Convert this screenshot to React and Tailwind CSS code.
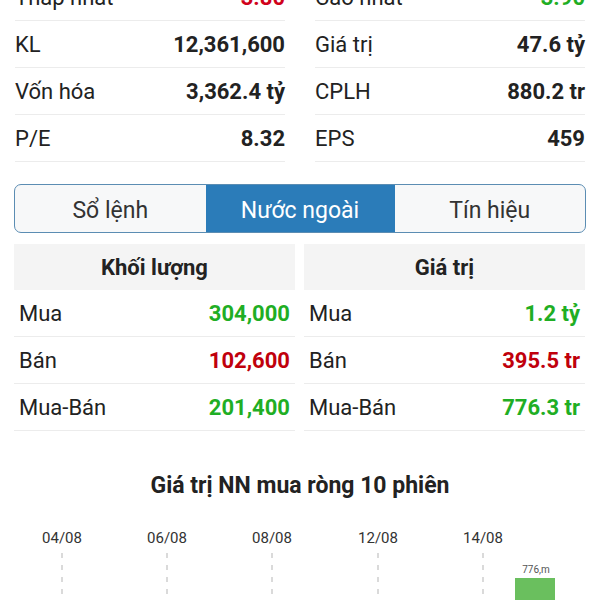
const font = { fontFamily: "Roboto, 'Noto Sans', sans-serif" };

const stats = [
  [
    ["Thấp nhất", "3.80", "text-[#d0021b]"],
    ["KL", "12,361,600", "text-[#222]"],
    ["Vốn hóa", "3,362.4 tỷ", "text-[#222]"],
    ["P/E", "8.32", "text-[#222]"],
  ],
  [
    ["Cao nhất", "3.90", "text-[#1fae24]"],
    ["Giá trị", "47.6 tỷ", "text-[#222]"],
    ["CPLH", "880.2 tr", "text-[#222]"],
    ["EPS", "459", "text-[#222]"],
  ],
];

const foreign = [
  {
    title: "Khối lượng",
    rows: [
      ["Mua", "304,000", "text-[#1fae24]"],
      ["Bán", "102,600", "text-[#c0000c]"],
      ["Mua-Bán", "201,400", "text-[#1fae24]"],
    ],
  },
  {
    title: "Giá trị",
    rows: [
      ["Mua", "1.2 tỷ", "text-[#1fae24]"],
      ["Bán", "395.5 tr", "text-[#c0000c]"],
      ["Mua-Bán", "776.3 tr", "text-[#1fae24]"],
    ],
  },
];

const dates = [
  ["04/08", 62],
  ["06/08", 167],
  ["08/08", 272],
  ["12/08", 378],
  ["14/08", 483],
];

function StatColumn({ rows }) {
  return (
    <div className="flex flex-col">
      {rows.map(([label, value, color]) => (
        <div
          key={label}
          className="flex h-[47px] items-center justify-between border-b border-[#ececec]"
        >
          <span className="text-[22px] text-[#222]">{label}</span>
          <span className={`text-[22px] font-bold ${color}`}>{value}</span>
        </div>
      ))}
    </div>
  );
}

function ForeignTable({ title, rows }) {
  return (
    <div className="flex flex-col">
      <div className="flex h-[46px] items-center justify-center bg-[#f4f4f4] text-[22px] font-bold text-[#222]">
        {title}
      </div>
      {rows.map(([label, value, color]) => (
        <div
          key={label}
          className="flex h-[47px] items-center justify-between border-b border-[#ececec] px-[5px]"
        >
          <span className="text-[22px] text-[#222]">{label}</span>
          <span className={`text-[22px] font-bold ${color}`}>{value}</span>
        </div>
      ))}
    </div>
  );
}

function Chart() {
  return (
    <div className="relative h-[110px] w-full">
      {dates.map(([d, x]) => (
        <div key={d}>
          <span
            className="absolute top-[23px] -translate-x-1/2 text-[15px] text-[#333]"
            style={{ left: x }}
          >
            {d}
          </span>
          <svg
            className="absolute top-[49px]"
            style={{ left: x - 1 }}
            width="2"
            height="60"
          >
            <line
              x1="1"
              y1="0"
              x2="1"
              y2="60"
              stroke="#b5b5b5"
              strokeWidth="1"
              strokeDasharray="5 7"
            />
          </svg>
        </div>
      ))}
      <span className="absolute left-[536px] top-[58px] -translate-x-1/2 text-[10px] text-[#555]">
        776,m
      </span>
      <div className="absolute left-[515px] top-[74px] h-[40px] w-[40px] bg-[#6abf5e]" />
    </div>
  );
}

export default function App() {
  return (
    <div className="h-[600px] w-[600px] overflow-hidden bg-white" style={font}>
      <div className="mt-[-26px] grid grid-cols-2 gap-[30px] px-[15px]">
        <StatColumn rows={stats[0]} />
        <StatColumn rows={stats[1]} />
      </div>

      <div className="mx-[14px] mt-[22px] flex h-[49px] overflow-hidden rounded-[7px] border border-[#5b8db3] bg-[#f7f8f9]">
        <div className="flex flex-1 items-center justify-center pt-[5px] text-[23px] text-[#333]">
          Sổ lệnh
        </div>
        <div className="flex w-[189px] items-center justify-center bg-[#2b7cb9] pt-[5px] text-[23px] text-white">
          Nước ngoài
        </div>
        <div className="flex flex-1 items-center justify-center pt-[5px] text-[23px] text-[#333]">
          Tín hiệu
        </div>
      </div>

      <div className="mt-[11px] grid grid-cols-2 gap-[9px] pl-[14px] pr-[15px]">
        {foreign.map((t) => (
          <ForeignTable key={t.title} {...t} />
        ))}
      </div>

      <div className="mt-[38px] text-center text-[23px] font-bold text-[#222]">
        Giá trị NN mua ròng 10 phiên
      </div>
      <Chart />
    </div>
  );
}
